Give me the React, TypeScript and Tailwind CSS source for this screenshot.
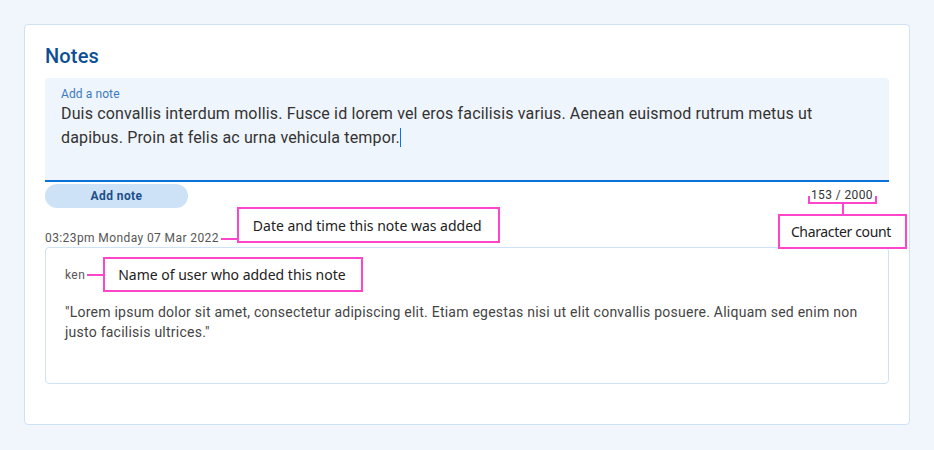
import React from "react";

const PINK = "#ff45c9";

function Callout({ text, className }: { text: string; className: string }) {
  return (
    <div
      className={`absolute flex items-center border-2 border-[#ff45c9] bg-white font-['Noto_Sans',sans-serif] text-[14px] text-[#222] whitespace-nowrap ${className}`}
    >
      {text}
    </div>
  );
}

export default function App() {
  return (
    <div className="min-h-[450px] w-[934px] bg-[#f1f6fd] p-6 font-['Roboto',sans-serif]">
      <div className="w-[886px] rounded border border-[#cfe2f5] bg-white px-5 pt-[19px] pb-10">
        <h2 className="text-[20px] leading-6 font-medium tracking-[0.15px] text-[#0d4f94]">Notes</h2>

        <div className="mt-[10px] rounded-t bg-[#eff5fc] border-b-2 border-[#0a72d8] px-4 pt-[8px] pb-[30px]">
          <div className="text-[12px] leading-4 tracking-[0.1px] text-[#3b7bc1]">Add a note</div>
          <div className="text-[16px] leading-6 tracking-[0.15px] text-[#333]">
            Duis convallis interdum mollis. Fusce id lorem vel eros facilisis varius. Aenean euismod rutrum metus ut
            <br />
            dapibus. Proin at felis ac urna vehicula tempor.
            <span className="inline-block w-px h-[19px] bg-[#0a72d8] align-[-4px]" />
          </div>
        </div>

        <div className="mt-[2px] flex items-start justify-between">
          <button className="h-6 w-[143px] rounded-full bg-[#cde2f6] text-[12px] font-bold tracking-[0.4px] text-[#1d4f8a]">
            Add note
          </button>
          <div className="relative mr-[16px] mt-[3px] text-[12px] leading-4 tracking-[0.4px] text-[#333]">
            153 / 2000
            <div className="absolute left-[-3px] right-[-4px] top-[9px] h-[8px] border-2 border-t-0 border-[#ff45c9]" />
            <div className="absolute left-1/2 top-[16px] w-[2px] h-[11px] bg-[#ff45c9]" />
            <Callout
              text="Character count"
              className="left-[-33px] top-[27px] w-[129px] h-[35px] pl-[11px] tracking-[-0.35px]"
            />
          </div>
        </div>

        <div className="mt-[22px] flex items-center">
          <span className="text-[12px] leading-4 tracking-[0.4px] text-[#555]">03:23pm Monday 07 Mar 2022</span>
          <div className="relative ml-[2px] mt-[2px] w-4 h-[2px]" style={{ backgroundColor: PINK }}>
            <Callout text="Date and time this note was added" className="left-4 top-[-31px] w-[263px] h-[36px] pl-[14px]" />
          </div>
        </div>

        <div className="mt-px rounded border border-[#cfe2f5] px-[19px] pt-[19px] pb-[41px]">
          <div className="flex items-center">
            <span className="text-[12px] leading-4 tracking-[0.4px] text-[#555]">ken</span>
            <div className="relative ml-[2px] w-4 h-[2px]" style={{ backgroundColor: PINK }}>
              <Callout text="Name of user who added this note" className="left-4 top-[-17px] w-[260px] h-[35px] pl-[13px]" />
            </div>
          </div>
          <p className="mt-[19px] text-[14px] leading-5 tracking-[0.24px] text-[#444]">
            "Lorem ipsum dolor sit amet, consectetur adipiscing elit. Etiam egestas nisi ut elit convallis posuere. Aliquam sed enim non justo facilisis ultrices."
          </p>
        </div>
      </div>
    </div>
  );
}
